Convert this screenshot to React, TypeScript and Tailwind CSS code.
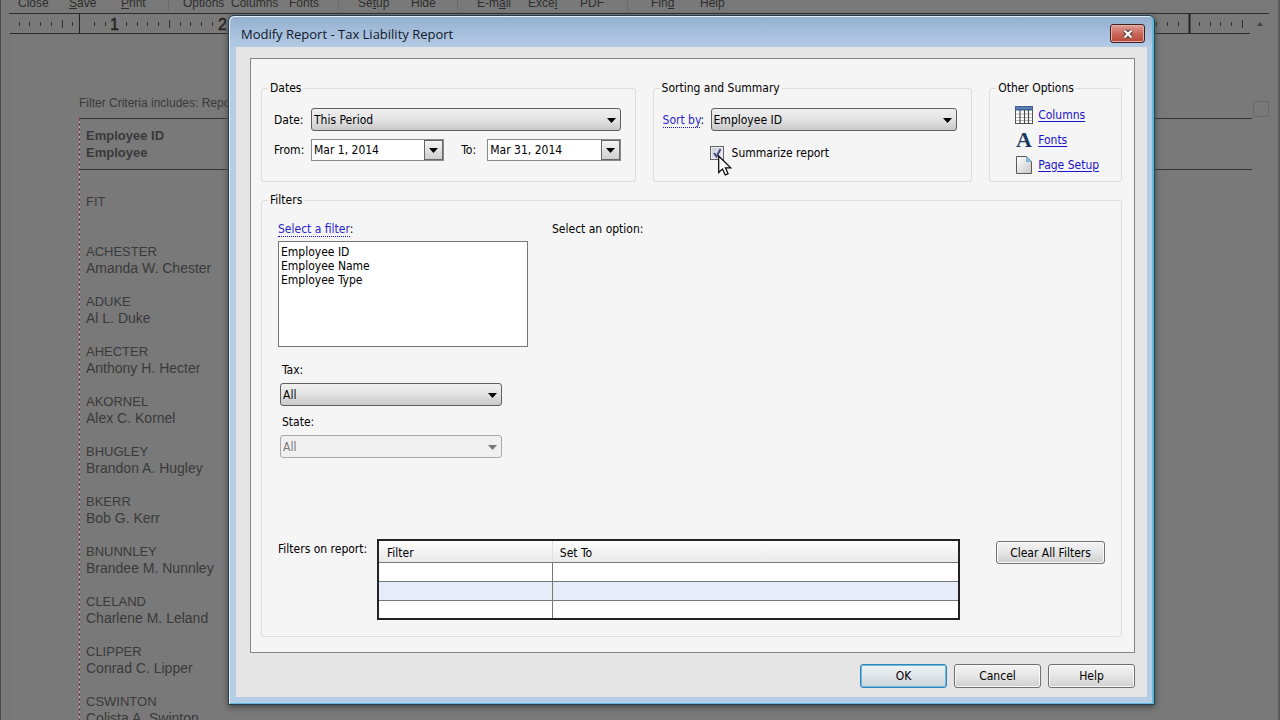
import type { ReactNode } from "react";

const tools = [
  { label: "Close", mark: -1, className: "w-[51px]" },
  { label: "Save", mark: 0, className: "w-[52px]" },
  { label: "Print", mark: 0, className: "w-[47px]" },
  { label: "Options", mark: -1, className: "w-[63px] border-l border-[#6a6a6a] pl-[14px]" },
  { label: "Columns", mark: -1, className: "w-[58px]" },
  { label: "Fonts", mark: -1, className: "w-[49px]" },
  { label: "Setup", mark: 2, className: "w-[73px] border-l border-[#6a6a6a] pl-[19px]" },
  { label: "Hide", mark: -1, className: "w-[46px]" },
  { label: "E-mail", mark: 3, className: "w-[71px] border-l border-[#6a6a6a] pl-[19px]" },
  { label: "Excel", mark: 4, className: "w-[52px]" },
  { label: "PDF", mark: -1, className: "w-[47px]" },
  { label: "Find", mark: 3, className: "w-[73px] border-l border-[#6a6a6a] pl-[23px]" },
  { label: "Help", mark: -1, className: "w-[51px]" }
];

const employees = [
  ["ACHESTER", "Amanda W. Chester"],
  ["ADUKE", "Al L. Duke"],
  ["AHECTER", "Anthony H. Hecter"],
  ["AKORNEL", "Alex C. Kornel"],
  ["BHUGLEY", "Brandon A. Hugley"],
  ["BKERR", "Bob G. Kerr"],
  ["BNUNNLEY", "Brandee M. Nunnley"],
  ["CLELAND", "Charlene M. Leland"],
  ["CLIPPER", "Conrad C. Lipper"],
  ["CSWINTON", "Colista A. Swinton"]
];

const buttonFace =
  "rounded-[3px] border border-[#707070] bg-linear-to-b from-[#f3f3f3] via-[#e6e6e6] to-[#cfcfcf] text-center text-black shadow-[inset_0_0_0_1px_#fafafa]";

function Toolbar() {
  return (
    <div className="ml-[8px] mr-[9px] h-[14px] overflow-hidden border-b border-[#2c2c2c] pl-[9px]">
      <div className="-mt-1 flex">
        {tools.map(({ label, mark, className }) => (
          <button key={label} className={`shrink-0 text-left text-xs leading-[14px] text-[#2e2e2e] ${className}`}>
            {mark < 0 ? (
              label
            ) : (
              <>
                {label.slice(0, mark)}
                <u>{label[mark]}</u>
                {label.slice(mark + 1)}
              </>
            )}
          </button>
        ))}
      </div>
    </div>
  );
}

function Ruler() {
  // tenths of an inch, right margin falls on 11in
  const ticks = Array.from({ length: 115 }, (_, i) => i + 1).filter((i) => i !== 110 && i !== 7);
  return (
    <div className="ml-[9px] mr-[8px] flex h-5">
      <div className="min-w-0 flex-1 overflow-hidden border-b border-[#2c2c2c]">
        <svg width="1242" height="19" className="block max-w-none" aria-hidden="true">
          {ticks.map((i) => {
            const x = Math.round(i * 10.73 - 2) + 0.5;
            if (i % 10 === 0) {
              return (
                <text
                  key={i}
                  x={x - 1}
                  y="16"
                  textAnchor="middle"
                  fontSize="16"
                  fontFamily="Liberation Sans, sans-serif"
                  fill="#222"
                  stroke="#222"
                  strokeWidth=".4"
                >
                  {i / 10}
                </text>
              );
            }
            const tall = i % 5 === 0;
            return <path key={i} d={tall ? `M${x} 6v8` : `M${x} 8v4`} stroke="#303030" />;
          })}
          <path d="M69.5 0v19" stroke="#222" />
          <path d="M1179.5 0v19" stroke="#222" strokeWidth="2" />
        </svg>
      </div>
      <div className="flex w-5 items-center justify-center">
        <svg width="6" height="4" aria-hidden="true">
          <path d="M0 4 3 0l3 4z" fill="#444" />
        </svg>
      </div>
    </div>
  );
}

function ReportPage() {
  return (
    <div className="flex h-full flex-col overflow-hidden border-l border-r-2 border-l-[#4a4a4a] border-r-[#5c5c5c] bg-[#797979] font-['Liberation_Sans',Arial,sans-serif] text-[#3a3a3a]">
      <Toolbar />
      <Ruler />
      <div className="ml-[8px] flex min-h-0 flex-1 border-l border-[#727272]">
        <div className="ml-[11px] min-w-0 flex-1 border-l border-[#757575] pl-[57px]">
          <p className="mt-[61px] text-xs leading-4">Filter Criteria includes: Report order is by Employee ID.</p>
          <div className="mt-[7px] bg-[repeating-linear-gradient(#7a3a48_0_3px,#c4aeb3_3px_5px)] bg-[length:1px_100%] bg-no-repeat pl-px">
            <div className="h-[52px] border-y border-[#333] pl-1.5 pt-2 text-[13px] font-bold leading-[17px]">
              <p>Employee ID</p>
              <p>Employee</p>
            </div>
            <div className="pl-1.5 pt-[23px] text-[13px] leading-[17px]">
              <p>FIT</p>
              <ul className="mt-[33px] flex flex-col gap-4">
                {employees.map(([id, name]) => (
                  <li key={id}>
                    <p>{id}</p>
                    <p className="text-sm leading-[17px]">{name}</p>
                  </li>
                ))}
              </ul>
            </div>
          </div>
        </div>
        <div className="w-[26px] pl-px pt-[67px]">
          <div className="h-4 w-4 rounded-[2px] border border-[#686868]" />
        </div>
      </div>
    </div>
  );
}

function Group({ title, className, children }: { title: string; className?: string; children: ReactNode }) {
  return (
    <fieldset className={`min-w-0 rounded-[3px] border border-[#dcdcdc] ${className ?? ""}`}>
      <legend className="ml-1.5 px-0.5 leading-4">{title}</legend>
      {children}
    </fieldset>
  );
}

function Arrow() {
  return (
    <svg width="9" height="5" viewBox="0 0 9 5" aria-hidden="true" className="block">
      <path d="M0 0h9L4.500 5z" fill="currentColor" />
    </svg>
  );
}

function Dropdown({ id, value, disabled }: { id: string; value: string; disabled?: boolean }) {
  return (
    <div className={`relative w-full ${disabled ? "text-[#777]" : "text-black"}`}>
      <select
        id={id}
        disabled={disabled}
        defaultValue={value}
        className="block h-[23px] w-full appearance-none rounded-[3px] border border-[#5f5f5f] bg-linear-to-b from-[#f0f0f0] from-0% via-[#e3e3e3] via-50% to-[#c8c8c8] pl-0.5 opacity-100 disabled:border-[#a8a8a8] disabled:bg-[#f0f0f0] disabled:bg-none"
      >
        <option>{value}</option>
      </select>
      <span className="pointer-events-none absolute right-[5px] top-[10px]">
        <Arrow />
      </span>
    </div>
  );
}

function DateField({ id, value }: { id: string; value: string }) {
  return (
    <div className="flex h-[22px] min-w-0 flex-1 border border-[#8a8a8a] bg-white">
      <input id={id} defaultValue={value} className="min-w-0 flex-1 pl-0.5" />
      <button
        aria-label="Open calendar"
        className="flex w-[19px] items-center justify-center border border-[#666] bg-linear-to-b from-[#f4f4f4] to-[#cfcfcf]"
      >
        <Arrow />
      </button>
    </div>
  );
}

function ColumnsIcon() {
  return (
    <svg width="18" height="18" viewBox="0 0 18 18" aria-hidden="true">
      <rect x="0.5" y="0.5" width="17" height="17" fill="#fff" stroke="#555" />
      <rect x="0" y="0" width="18" height="4.500" fill="#3f6399" />
      <path d="M1 2h16" stroke="#7d9ac4" />
      <path d="M1 8h16M1 11.500h16M1 14.500h16" stroke="#b9b9b9" />
      <path d="M5 4v14M9.500 4v14M13.500 4v14" stroke="#4c4c4c" strokeWidth="1.200" />
    </svg>
  );
}

function FontIcon() {
  return (
    <svg width="18" height="18" viewBox="0 0 18 18" aria-hidden="true">
      <text x="9" y="16" textAnchor="middle" fontFamily="Liberation Serif, serif" fontSize="22" fontWeight="700" fill="#1c3a5e">
        A
      </text>
    </svg>
  );
}

function PageIcon() {
  return (
    <svg width="18" height="18" viewBox="0 0 18 18" aria-hidden="true">
      <defs>
        <linearGradient id="sheet" x1="0" y1="0" x2="1" y2="1">
          <stop offset="0" stopColor="#fff" />
          <stop offset="1" stopColor="#c8c8c8" />
        </linearGradient>
      </defs>
      <path d="M1.500.5h10l5 5v12h-15z" fill="url(#sheet)" stroke="#5a5a5a" />
      <path d="M11.500.5v5h5z" fill="#8cc4e6" stroke="#5b9cc4" strokeWidth=".7" />
    </svg>
  );
}

function OptionLink({ icon, label }: { icon: ReactNode; label: string }) {
  return (
    <div className="flex h-[25px] items-center gap-[5px]">
      {icon}
      <a href="#" className="text-[#1a12cc] underline underline-offset-2">
        {label}
      </a>
    </div>
  );
}

function SummarizeCheck() {
  return (
    <span className="relative block h-[14px] w-[14px]">
      <input
        id="summarize"
        type="checkbox"
        defaultChecked
        className="block h-[14px] w-[14px] appearance-none border border-[#666] bg-linear-to-br from-[#c9c9d6] to-[#f2f2f8] shadow-[inset_0_0_0_1px_#ececf2]"
      />
      <svg width="14" height="14" viewBox="0 0 14 14" aria-hidden="true" className="pointer-events-none absolute left-0 top-0">
        <path d="M4 7l2.500 3.500L10.500 3" fill="none" stroke="#4a4a85" strokeWidth="2" />
      </svg>
      <svg width="14" height="21" viewBox="0 0 14 21" aria-hidden="true" className="pointer-events-none absolute left-2 top-[9px]">
        <path d="M.7 1v16.500l3.800-3.600 2.800 6 2.800-1.200-2.700-5.900h5.400z" fill="#fff" stroke="#000" strokeWidth="1.200" />
      </svg>
    </span>
  );
}

function FilterTable() {
  return (
    <table className="w-full table-fixed border-collapse border-2 border-[#222] bg-white text-left">
      <thead>
        <tr className="h-[22px] bg-linear-to-b from-white to-[#e9e9e9]">
          <th className="w-[30%] border-b border-r border-b-[#777] border-r-[#e0e0e0] pl-2 pt-1 font-normal">Filter</th>
          <th className="border-b border-[#777] pl-[7px] pt-1 font-normal">Set To</th>
        </tr>
      </thead>
      <tbody>
        {[0, 1, 2].map((row) => (
          <tr key={row} className="h-[19px] even:bg-[#e6edf8]">
            <td className="border border-[#777]" />
            <td className="border border-[#777]" />
          </tr>
        ))}
      </tbody>
    </table>
  );
}

function Dialog() {
  return (
    <section
      role="dialog"
      aria-labelledby="dialog-title"
      className="min-w-0 flex-1 rounded-t-[6px] border border-[#24414f] bg-linear-to-b from-[#94afd0] from-0% to-[#b5cce6] to-[32px] px-[7px] pb-[7px] font-['DejaVu_Sans_Condensed','Noto_Sans',sans-serif] text-xs leading-4 text-black shadow-[inset_1px_1px_0_#e4eef8,inset_-2px_-1px_0_#62b8dc,0_2px_6px_#444]"
    >
      <header className="flex h-[31px] items-center justify-between pl-[5px] pr-0.5 pt-1">
        <h1 id="dialog-title" className="font-['Open_Sans',sans-serif] text-[13px] text-[#101828]">
          Modify Report - Tax Liability Report
        </h1>
        <button
          aria-label="Close"
          className="flex h-[19px] w-[35px] items-center justify-center rounded-[3px] border border-[#3e2020] bg-linear-to-b from-[#e0a097] from-0% via-[#c9685b] via-50% to-[#b84636] shadow-[inset_0_0_0_1px_#e6b0a8]"
        >
          <svg width="12" height="10" viewBox="0 0 12 10" aria-hidden="true">
            <path d="M2.500 1.500l7 7M9.500 1.500l-7 7" stroke="#4d3a3a" strokeWidth="4" />
            <path d="M2.500 1.500l7 7M9.500 1.500l-7 7" stroke="#fff" strokeWidth="2.200" />
          </svg>
        </button>
      </header>

      <div className="bg-[#e5e5e5] pb-[9px] pl-[14px] pr-3 pt-[11px]">
        <div className="border border-[#858585] bg-[#f5f5f5] pb-[15px] pl-[10px] pr-3 pt-[21px]">
          <div className="grid grid-cols-[375fr_320fr_133fr] gap-[17px]">
            <Group title="Dates" className="h-[102px]">
              <div className="flex flex-col gap-[8px] pl-3 pr-[14px] pt-3">
                <div className="flex items-center">
                  <label htmlFor="period" className="w-[37px] shrink-0">
                    Date:
                  </label>
                  <Dropdown id="period" value="This Period" />
                </div>
                <div className="flex items-center">
                  <label htmlFor="from" className="w-[37px] shrink-0">
                    From:
                  </label>
                  <DateField id="from" value="Mar 1, 2014" />
                  <label htmlFor="to" className="ml-[17px] w-[26px] shrink-0">
                    To:
                  </label>
                  <DateField id="to" value="Mar 31, 2014" />
                </div>
              </div>
            </Group>

            <Group title="Sorting and Summary" className="h-[102px]">
              <div className="flex flex-col gap-[14px] pl-[9px] pr-[14px] pt-3">
                <div className="flex items-center">
                  <label htmlFor="sort" className="w-[48px] shrink-0">
                    <span className="border-b border-dotted border-[#1a12cc] text-[#2a1fd0]">Sort by</span>:
                  </label>
                  <Dropdown id="sort" value="Employee ID" />
                </div>
                <div className="flex items-center gap-2 pl-[47px]">
                  <SummarizeCheck />
                  <label htmlFor="summarize">Summarize report</label>
                </div>
              </div>
            </Group>

            <Group title="Other Options" className="h-[102px]">
              <div className="pl-[25px] pt-1.5">
                <OptionLink icon={<ColumnsIcon />} label="Columns" />
                <OptionLink icon={<FontIcon />} label="Fonts" />
                <OptionLink icon={<PageIcon />} label="Page Setup" />
              </div>
            </Group>
          </div>

          <Group title="Filters" className="mt-[10px]">
            <div className="px-4 pb-4 pt-[13px]">
              <div className="flex gap-6">
                <div className="w-[250px]">
                  <label htmlFor="filters">
                    <span className="border-b border-dotted border-[#1a12cc] text-[#2a1fd0]">Select a filter</span>:
                  </label>
                  <select id="filters" size={6} className="mt-1 block h-[106px] w-full border border-[#777] bg-white py-[3px]">
                    <option className="h-[14px] min-h-0 p-0 pl-0.5 leading-[14px]">Employee ID</option>
                    <option className="h-[14px] min-h-0 p-0 pl-0.5 leading-[14px]">Employee Name</option>
                    <option className="h-[14px] min-h-0 p-0 pl-0.5 leading-[14px]">Employee Type</option>
                  </select>
                </div>
                <p>Select an option:</p>
              </div>

              <div className="mt-[15px] w-[224px] pl-0.5">
                <label htmlFor="tax" className="block pl-0.5">
                  Tax:
                </label>
                <div className="pt-[5px]">
                  <Dropdown id="tax" value="All" />
                </div>
                <label htmlFor="state" className="mt-2 block pl-0.5">
                  State:
                </label>
                <div className="pt-[5px]">
                  <Dropdown id="state" value="All" disabled />
                </div>
              </div>

              <div className="mt-[81px] flex items-start">
                <p className="w-[99px] shrink-0 pt-0.5">Filters on report:</p>
                <div className="min-w-0 flex-1">
                  <FilterTable />
                </div>
                <button className={`ml-9 mt-0.5 h-[23px] w-[109px] shrink-0 ${buttonFace}`}>Clear All Filters</button>
              </div>
            </div>
          </Group>
        </div>

        <div className="mt-[11px] flex justify-end gap-[7px]">
          <button
            autoFocus
            className="h-6 w-[87px] rounded-[3px] border border-[#3c7fb1] bg-linear-to-b from-[#f1f5f8] to-[#cdd3d8] shadow-[inset_0_0_0_1px_#5cc0ea] outline-none"
          >
            OK
          </button>
          <button className={`h-6 w-[87px] ${buttonFace}`}>Cancel</button>
          <button className={`h-6 w-[87px] ${buttonFace}`}>Help</button>
        </div>
      </div>
    </section>
  );
}

export default function App() {
  return (
    <main className="relative h-screen overflow-hidden">
      <ReportPage />
      <div className="absolute inset-0 flex items-start pl-[228px] pr-[125px] pt-[15px]">
        <Dialog />
      </div>
    </main>
  );
}
